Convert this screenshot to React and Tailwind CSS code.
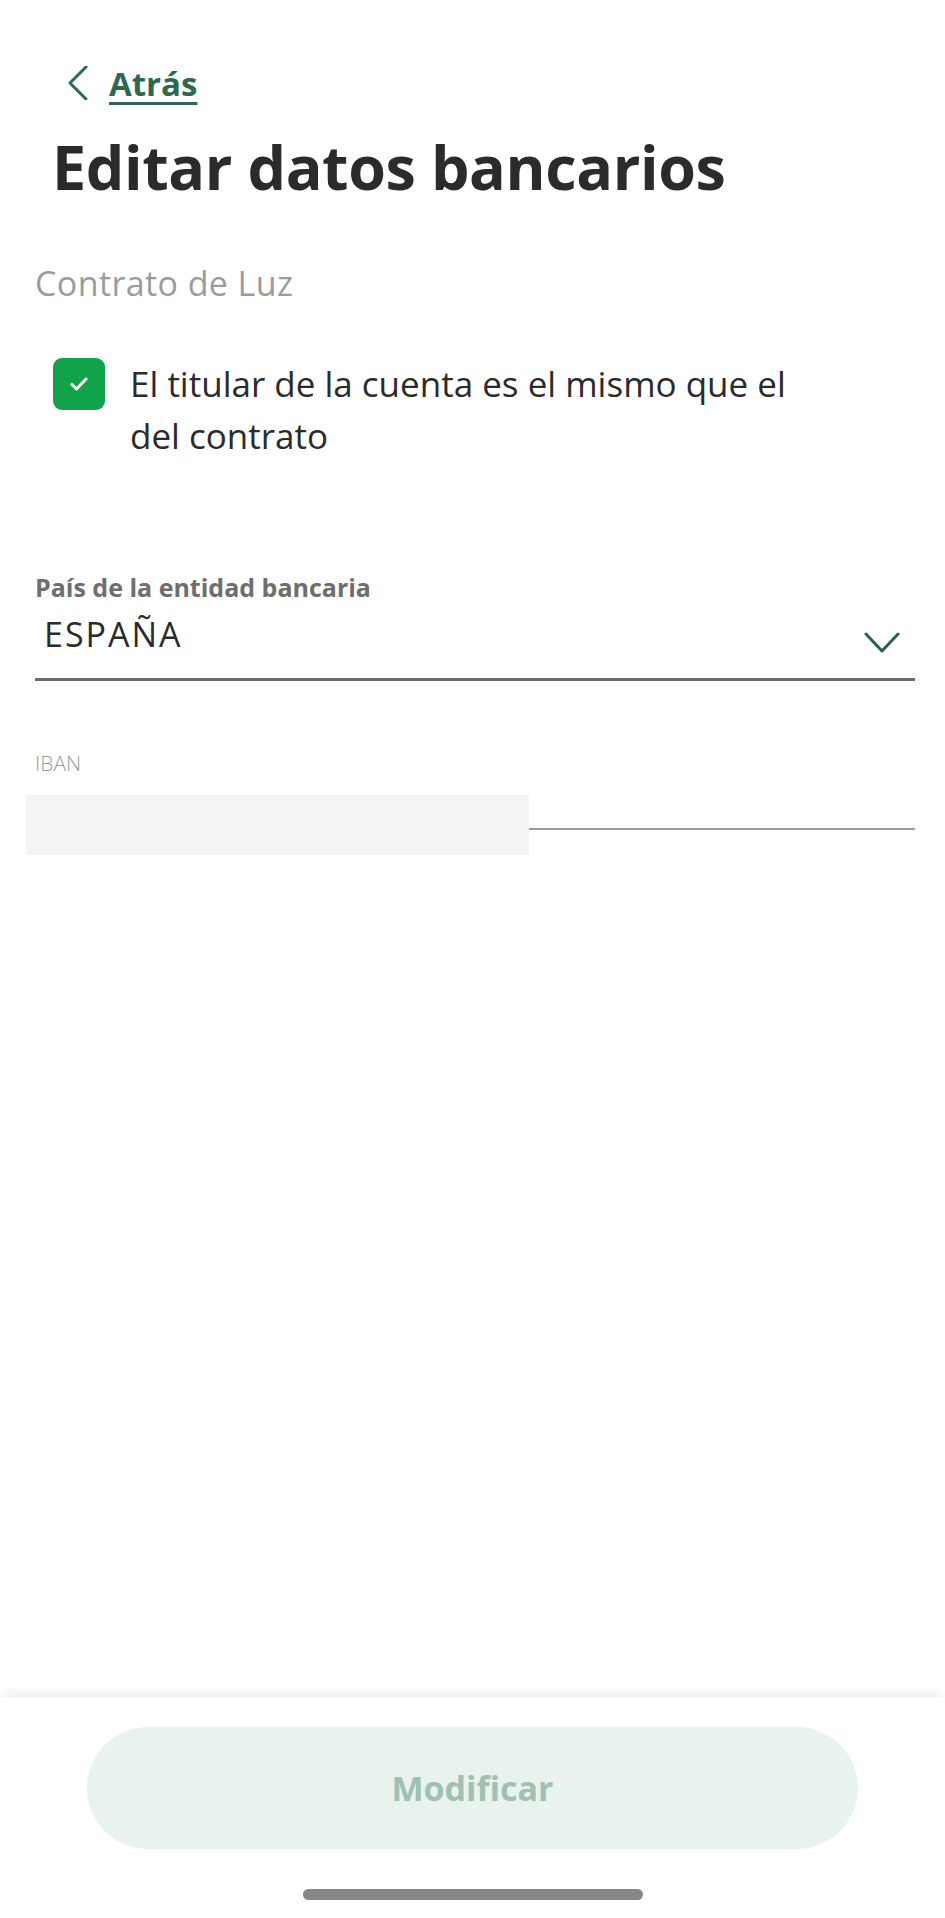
export default function App() {
  return (
    <div
      className="flex h-[1918px] w-full flex-col bg-white text-[#2b2b2b]"
      style={{ fontFamily: '"Open Sans", "Noto Sans", sans-serif' }}
    >
      <main className="flex-1">
        {/* back link */}
        <div className="flex items-center pl-[66px] pt-[66px]">
          <svg width="24" height="34" viewBox="0 0 24 34" fill="none">
            <polyline
              points="20,1 4,17 20,33"
              stroke="#2b6a50"
              strokeWidth="3"
              strokeLinecap="round"
              strokeLinejoin="round"
            />
          </svg>
          <a
            href="#"
            className="ml-[19px] text-[33px] font-bold leading-none text-[#2b6a50] underline decoration-[3px] underline-offset-[6px]"
          >
            Atrás
          </a>
        </div>

        <h1 className="mt-[36px] pl-[52px] text-[61px] font-bold leading-none tracking-[-0.4px]">
          Editar datos bancarios
        </h1>

        <div className="px-[30px] pl-[35px]">
          <p className="mt-[69px] text-[34px] leading-none tracking-[0.4px] text-[#9b9b9b]">
            Contrato de Luz
          </p>

          <label className="mt-[56px] flex items-start">
            <span className="ml-[18px] mt-[2px] flex h-[52px] w-[52px] shrink-0 items-center justify-center rounded-[9px] bg-[#10a34a]">
              <svg width="18" height="14" viewBox="0 0 18 14" fill="none">
                <polyline
                  points="2,7.5 6.5,12 16,2"
                  stroke="white"
                  strokeWidth="3"
                  strokeLinecap="round"
                  strokeLinejoin="round"
                />
              </svg>
            </span>
            <span className="ml-[25px] mt-[2px] max-w-[680px] text-[35px] leading-[52px]">
              El titular de la cuenta es el mismo que el del contrato
            </span>
          </label>

          <div className="mt-[113px]">
            <p className="text-[25px] font-bold leading-none text-[#6e6e6e]">
              País de la entidad bancaria
            </p>
            <div className="mt-[17px] flex items-start justify-between border-b-[3px] border-[#6b6b6b] pb-[25px] pl-[9px] pr-[15px]">
              <span className="text-[34px] leading-none tracking-[2px]">ESPAÑA</span>
              <svg className="mt-[15px]" width="36" height="21" viewBox="0 0 36 21" fill="none">
                <polyline
                  points="2,2 18,19 34,2"
                  stroke="#2d5f4c"
                  strokeWidth="3"
                  strokeLinecap="round"
                  strokeLinejoin="round"
                />
              </svg>
            </div>
          </div>

          <div className="mt-[72px]">
            <p className="text-[21px] font-light leading-none text-[#9b9b9b]">IBAN</p>
            <div className="mt-[21px] flex items-start">
              <div className="-ml-[9px] h-[60px] w-[503px] bg-[#f4f4f4]" />
              <div className="mt-[33px] flex-1 border-b-2 border-[#9a9a9a]" />
            </div>
          </div>
        </div>
      </main>

      <footer className="flex flex-col items-center bg-white pt-[30px] shadow-[0_-6px_10px_-2px_rgba(0,0,0,0.07)]">
        <button
          disabled
          className="flex h-[122px] w-[771px] items-center justify-center rounded-full bg-[#e9f3ee] text-[34px] font-bold text-[#9fc0b2]"
        >
          Modificar
        </button>
        <div className="mb-[18px] mt-[40px] h-[11px] w-[340px] rounded-full bg-[#878787]" />
      </footer>
    </div>
  );
}
